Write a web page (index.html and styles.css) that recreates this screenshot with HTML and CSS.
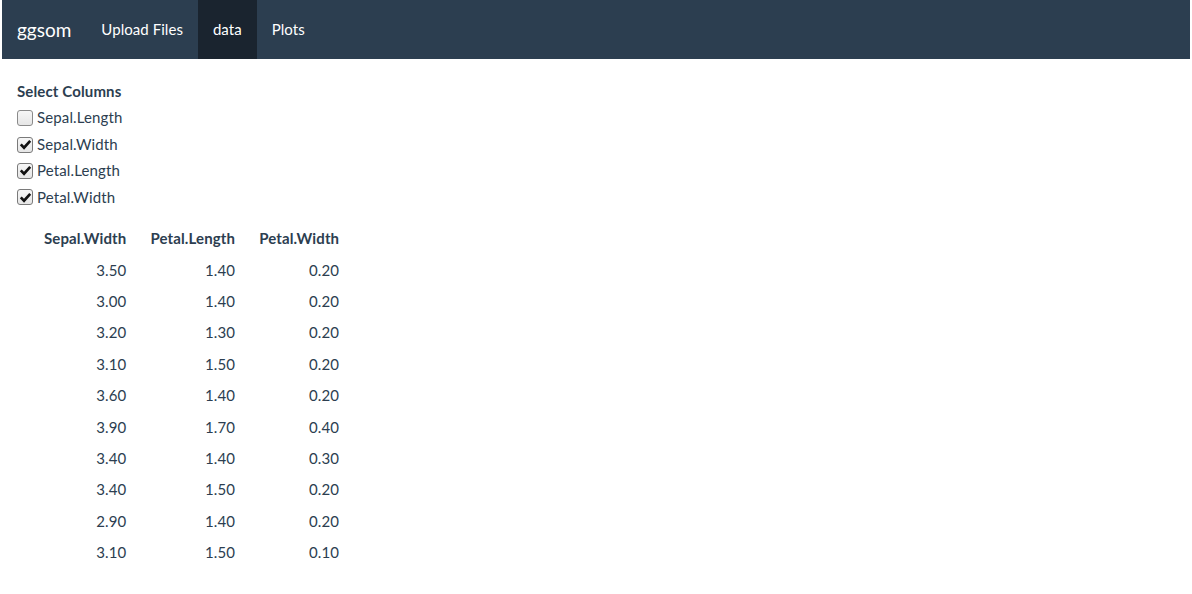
FILE: index.html
```html
<!DOCTYPE html>
<html>
<head>
<meta charset="utf-8">
<title>ggsom</title>
<link rel="stylesheet" href="styles.css">
</head>
<body>
<nav class="navbar">
  <span class="brand">ggsom</span>
  <ul class="nav">
    <li class="nav-item">Upload Files</li>
    <li class="nav-item active">data</li>
    <li class="nav-item">Plots</li>
  </ul>
</nav>
<main class="content">
  <div class="form-group">
    <div class="control-label">Select Columns</div>
    <label class="checkbox"><span class="box"></span>Sepal.Length</label>
    <label class="checkbox"><span class="box checked"><svg viewBox="0 0 16 16" width="13" height="13"><path d="M2.2 7.8 L6.2 11.9 L13.8 3.5" fill="none" stroke="#111" stroke-width="3.3"/></svg></span>Sepal.Width</label>
    <label class="checkbox"><span class="box checked"><svg viewBox="0 0 16 16" width="13" height="13"><path d="M2.2 7.8 L6.2 11.9 L13.8 3.5" fill="none" stroke="#111" stroke-width="3.3"/></svg></span>Petal.Length</label>
    <label class="checkbox"><span class="box checked"><svg viewBox="0 0 16 16" width="13" height="13"><path d="M2.2 7.8 L6.2 11.9 L13.8 3.5" fill="none" stroke="#111" stroke-width="3.3"/></svg></span>Petal.Width</label>
  </div>
  <table class="data-table">
    <thead>
      <tr><th>Sepal.Width</th><th>Petal.Length</th><th>Petal.Width</th></tr>
    </thead>
    <tbody>
      <tr><td>3.50</td><td>1.40</td><td>0.20</td></tr>
      <tr><td>3.00</td><td>1.40</td><td>0.20</td></tr>
      <tr><td>3.20</td><td>1.30</td><td>0.20</td></tr>
      <tr><td>3.10</td><td>1.50</td><td>0.20</td></tr>
      <tr><td>3.60</td><td>1.40</td><td>0.20</td></tr>
      <tr><td>3.90</td><td>1.70</td><td>0.40</td></tr>
      <tr><td>3.40</td><td>1.40</td><td>0.30</td></tr>
      <tr><td>3.40</td><td>1.50</td><td>0.20</td></tr>
      <tr><td>2.90</td><td>1.40</td><td>0.20</td></tr>
      <tr><td>3.10</td><td>1.50</td><td>0.10</td></tr>
    </tbody>
  </table>
</main>
</body>
</html>
```

FILE: styles.css
```css
html, body {
  margin: 0;
  padding: 0;
  background: #ffffff;
}
body {
  font-family: Lato, "Open Sans", sans-serif;
  font-size: 15px;
  line-height: 1.42857;
  color: #2c3e50;
  letter-spacing: 0.13px;
}
.navbar {
  display: flex;
  align-items: stretch;
  height: 59px;
  margin: 0 2px 21px 2px;
  background: #2c3e50;
  color: #ffffff;
}
.brand {
  display: flex;
  align-items: center;
  padding: 0 15px;
  font-size: 19px;
  line-height: 21px;
  letter-spacing: 0;
}
.nav {
  display: flex;
  margin: 0;
  padding: 0;
  list-style: none;
}
.nav-item {
  display: flex;
  align-items: center;
  padding: 1px 15px 0 15px;
  letter-spacing: 0.05px;
}
.nav-item.active {
  background: #1a242f;
}
.content {
  padding: 1px 17px 0 17px;
}
.form-group {
  display: flex;
  flex-direction: column;
  align-items: flex-start;
  margin-bottom: 15px;
}
.control-label {
  font-weight: 700;
  margin-bottom: 5px;
}
.checkbox {
  display: flex;
  align-items: center;
  gap: 4px;
  margin-bottom: 5px;
}
.checkbox:last-child {
  margin-bottom: 0;
}
.box {
  display: flex;
  align-items: center;
  justify-content: center;
  width: 14px;
  height: 14px;
  border: 1px solid #8a8a8a;
  border-radius: 3px;
  background: linear-gradient(#f6f6f6, #e6e6e6);
}
.box.checked {
  border-color: #7a7a7a;
}
.data-table {
  margin-left: 15px;
  border-collapse: collapse;
}
.data-table th,
.data-table td {
  padding: 5px 12px;
  text-align: right;
  height: 21px;
}
.data-table th {
  font-weight: 700;
}
```
